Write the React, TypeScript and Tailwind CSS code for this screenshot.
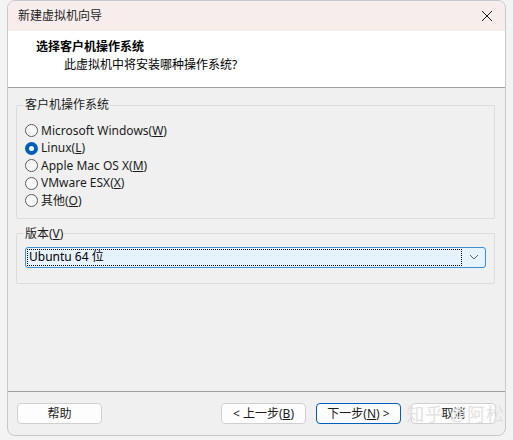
import React, { useState } from 'react';

const font = { fontFamily: '"Segoe UI", "Noto Sans", "Noto Sans CJK SC", sans-serif' };

const options = [
  { id: 'win', label: 'Microsoft Windows(', key: 'W' },
  { id: 'linux', label: 'Linux(', key: 'L' },
  { id: 'mac', label: 'Apple Mac OS X(', key: 'M' },
  { id: 'esx', label: 'VMware ESX(', key: 'X' },
  { id: 'other', label: '其他(', key: 'O' },
];

function Radio({ checked }: { checked: boolean }) {
  return checked ? (
    <span className="w-[13px] h-[13px] rounded-full bg-[#005fb8] flex items-center justify-center flex-shrink-0">
      <span className="w-[5px] h-[5px] rounded-full bg-white" />
    </span>
  ) : (
    <span className="w-[13px] h-[13px] rounded-full border border-[#5a5a5a] bg-[#f8f8f8] flex-shrink-0" />
  );
}

function Btn({ children, primary }: { children: React.ReactNode; primary?: boolean }) {
  return (
    <button
      className={`w-[85px] h-[21px] rounded-[4px] bg-[#fdfdfd] text-[12px] text-[#1b1b1b] flex items-center justify-center border ${
        primary ? 'border-[#005fb8]' : 'border-[#d0d0d0]'
      }`}
    >
      {children}
    </button>
  );
}

export default function App() {
  const [os, setOs] = useState('linux');

  return (
    <div className="w-[513px] h-[440px] bg-[#f3f3f3] pl-[7px] pr-[7px]" style={font}>
      <div className="w-[499px] h-[436px] rounded-[8px] border border-[#c8c8c8] bg-[#f0f0f0] overflow-hidden flex flex-col">
        {/* Title bar */}
        <div className="h-[30px] bg-[#f8eded] flex items-center justify-between pl-[10px] pr-[10px] flex-shrink-0">
          <span className="text-[12px] text-[#1b1b1b]">新建虚拟机向导</span>
          <svg width="12" height="12" viewBox="0 0 12 12" className="mr-[2px]">
            <path d="M1 1L11 11M11 1L1 11" stroke="#1b1b1b" strokeWidth="1" />
          </svg>
        </div>

        {/* Header */}
        <div className="h-[57px] bg-white border-b border-[#a0a0a0] pl-[28px] pt-[7px] flex-shrink-0">
          <div className="text-[12px] font-bold text-[#000] leading-[17px]">选择客户机操作系统</div>
          <div className="text-[12px] text-[#000] leading-[18px] pl-[28px] mt-[1px]">此虚拟机中将安装哪种操作系统?</div>
        </div>

        {/* Body */}
        <div className="flex-1 px-[8px] pt-[8px] flex flex-col gap-[6px]">
          <fieldset className="border border-[#dcdcdc] rounded-[2px] px-[8px] pb-[8px] pt-[8px] mr-[2px]">
            <legend className="text-[12px] text-[#1b1b1b] px-[1px] -ml-[1px]">客户机操作系统</legend>
            <div className="flex flex-col">
              {options.map((o) => (
                <label
                  key={o.id}
                  className="flex items-center gap-[3px] h-[17.5px] text-[12px] text-[#1b1b1b]"
                  onClick={() => setOs(o.id)}
                >
                  <Radio checked={os === o.id} />
                  <span>
                    {o.label}
                    <span className="underline">{o.key}</span>)
                  </span>
                </label>
              ))}
            </div>
          </fieldset>

          <fieldset className="border border-[#dcdcdc] rounded-[2px] px-[8px] pb-[15px] pt-[4px] mr-[2px]">
            <legend className="text-[12px] text-[#1b1b1b] px-[1px] -ml-[1px]">
              版本(<span className="underline">V</span>)
            </legend>
            <div className="h-[21px] rounded-[3px] border border-[#3c8fd0] bg-[#e6f2fc] flex items-center pl-[1px] pr-[6px]">
              <div className="flex-1 h-[17px] border border-dotted border-[#000] flex items-center pl-[1px] text-[12px] text-[#000]">
                Ubuntu 64 位
              </div>
              <svg width="10" height="6" viewBox="0 0 10 6" className="ml-[7px]">
                <path d="M1 1L5 5L9 1" stroke="#606060" fill="none" strokeWidth="1" />
              </svg>
            </div>
          </fieldset>
        </div>

        {/* Footer */}
        <div className="h-[44px] border-t border-[#a0a0a0] flex items-center px-[9px] flex-shrink-0 relative">
          <Btn>帮助</Btn>
          <div className="flex-1" />
          <div className="flex gap-[10px]">
            <Btn>
              &lt; 上一步(<span className="underline">B</span>)
            </Btn>
            <Btn primary>
              下一步(<span className="underline">N</span>) &gt;
            </Btn>
            <Btn>取消</Btn>
          </div>
          <span className="absolute right-[0px] top-[9px] text-[18px] text-[#e2e2e2] tracking-[1px] pointer-events-none">
            知乎 @阿松
          </span>
        </div>
      </div>
    </div>
  );
}
